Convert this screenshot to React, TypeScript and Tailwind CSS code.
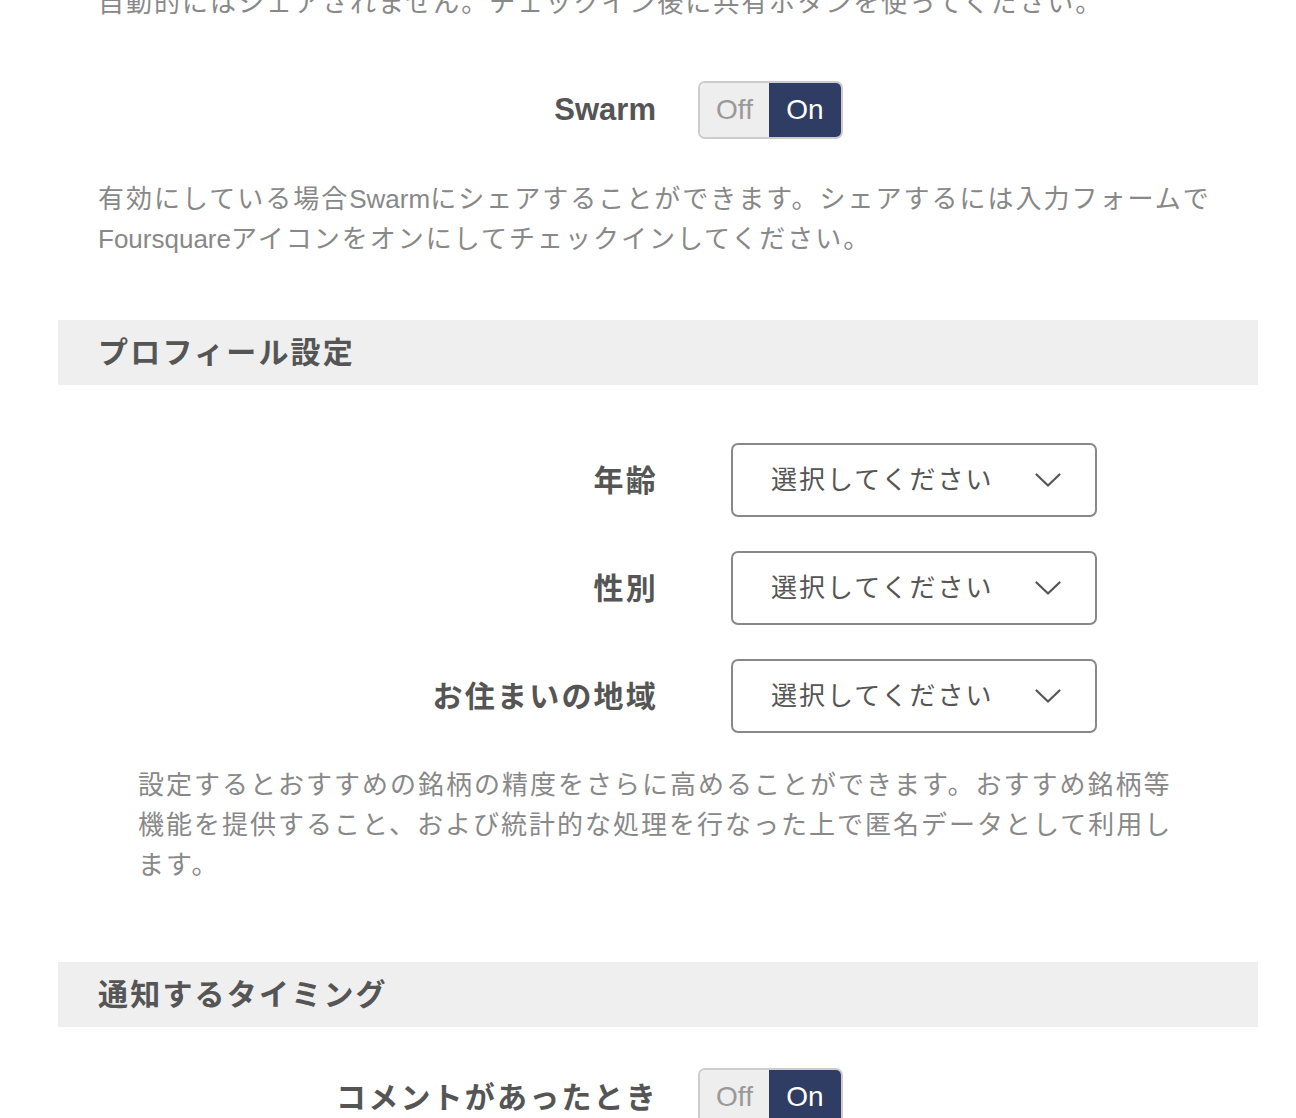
const bodyText = 'text-[26px] leading-[40px] tracking-[2px] text-[#888888]'
const labelText = 'text-[30px] font-bold tracking-[2.2px] text-[#555555]'

function Latin({ children }: { children: string }) {
  return <span className="tracking-normal">{children}</span>
}

function Toggle() {
  return (
    <div className="flex h-[58px] overflow-hidden rounded-[7px] border-2 border-[#cccccc]">
      <div className="flex w-[69px] items-center justify-center bg-[#eeeeee] text-[28px] text-[#999999]">Off</div>
      <div className="flex w-[72px] items-center justify-center bg-[#2f3d64] text-[28px] text-white">On</div>
    </div>
  )
}

function SelectBox() {
  return (
    <div className="ml-[73px] flex h-[74px] w-[366px] items-center justify-between rounded-[7px] border-2 border-[#888888] pl-[38px] pr-[34px]">
      <span className="text-[26px] tracking-[2px] text-[#555555]">選択してください</span>
      <svg width="26" height="14" viewBox="0 0 26 14" fill="none" stroke="#555555" strokeWidth="2.2" strokeLinecap="round" strokeLinejoin="round">
        <polyline points="1.5,1.5 13,12.5 24.5,1.5" />
      </svg>
    </div>
  )
}

function RowLabel({ label, latin }: { label: string; latin?: boolean }) {
  return (
    <div className={`w-[600px] text-right ${labelText} ${latin ? 'pr-[2px] text-[31px] tracking-normal' : ''}`}>{label}</div>
  )
}

function ToggleRow({ label, latin }: { label: string; latin?: boolean }) {
  return (
    <div className="flex items-center">
      <RowLabel label={label} latin={latin} />
      <div className="ml-[40px]">
        <Toggle />
      </div>
    </div>
  )
}

function SelectRow({ label }: { label: string }) {
  return (
    <div className="flex items-center">
      <RowLabel label={label} />
      <SelectBox />
    </div>
  )
}

function SectionHeader({ title }: { title: string }) {
  return (
    <h2 className={`flex h-[65px] items-center bg-[#efefef] px-10 ${labelText}`}>{title}</h2>
  )
}

export default function App() {
  return (
    <div className="h-[1118px] w-[1296px] overflow-hidden bg-white font-['Liberation_Sans','Noto_Sans_CJK_JP',sans-serif]">
      <div className="ml-[58px] w-[1200px]">
        <p className={`-mt-[17px] whitespace-nowrap px-10 ${bodyText}`}>
          自動的にはシェアされません。チェックイン後に共有ボタンを使ってください。
        </p>

        <div className="mt-[58px]">
          <ToggleRow label="Swarm" latin />
        </div>

        <p className={`mt-10 whitespace-nowrap px-10 ${bodyText}`}>
          有効にしている場合<Latin>Swarm</Latin>にシェアすることができます。シェアするには入力フォームで
          <br />
          <Latin>Foursquare</Latin>アイコンをオンにしてチェックインしてください。
        </p>

        <div className="mt-[61px]">
          <SectionHeader title="プロフィール設定" />
        </div>

        <div className="mt-[58px] flex flex-col gap-[34px]">
          <SelectRow label="年齢" />
          <SelectRow label="性別" />
          <SelectRow label="お住まいの地域" />
        </div>

        <p className={`mt-8 whitespace-nowrap px-20 ${bodyText}`}>
          設定するとおすすめの銘柄の精度をさらに高めることができます。おすすめ銘柄等
          <br />
          機能を提供すること、および統計的な処理を行なった上で匿名データとして利用し
          <br />
          ます。
        </p>

        <div className="mt-[77px]">
          <SectionHeader title="通知するタイミング" />
        </div>

        <div className="mt-[41px]">
          <ToggleRow label="コメントがあったとき" />
        </div>
      </div>
    </div>
  )
}
